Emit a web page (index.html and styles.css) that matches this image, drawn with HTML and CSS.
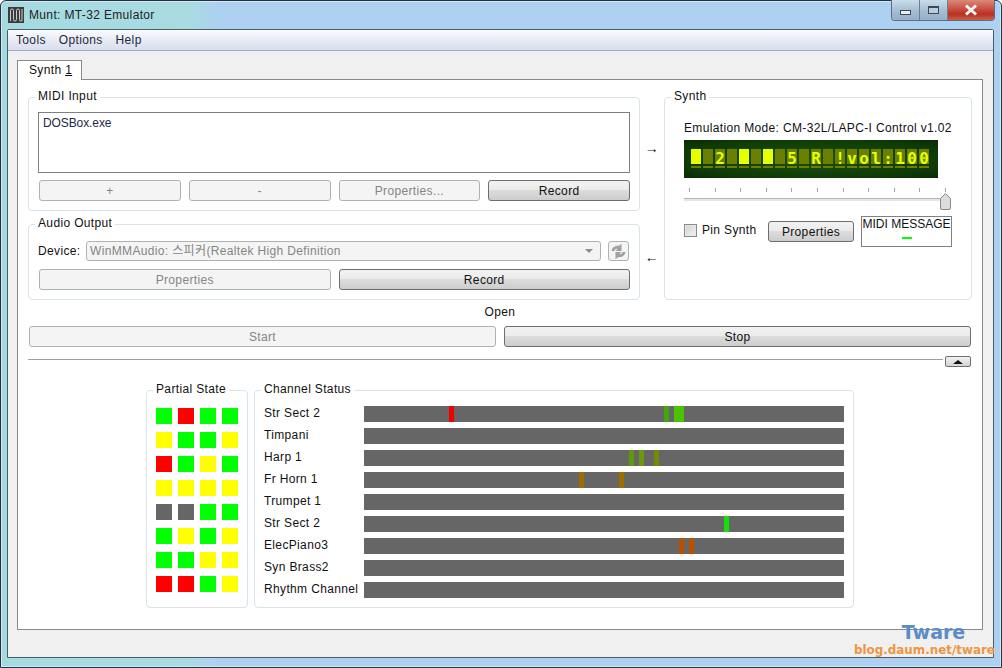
FILE: index.html
```html
<!DOCTYPE html>
<html lang="en">
<head>
<meta charset="utf-8">
<title>Munt: MT-32 Emulator</title>
<link rel="stylesheet" href="styles.css">
</head>
<body>
<div class="window">
  <header class="titlebar">
    <svg class="app-icon" width="16" height="16" viewBox="0 0 16 16">
      <rect width="16" height="16" fill="#3c3c3c"/>
      <path d="M2.5 14V3.5Q2.5 2 4 2T5.500 3.500V12.500Q5.500 14 7 14T8.500 12.500V3.500Q8.500 2 10 2T11.500 3.500V12.500Q11.500 14 13 14T14 12.500V2" fill="none" stroke="#cfcfcf" stroke-width="1"/>
    </svg>
    <span class="title-text">Munt: MT-32 Emulator</span>
    <div class="controls">
      <div class="ctl ctl-min"><i class="glyph-min"></i></div>
      <div class="ctl ctl-max"><i class="glyph-max"></i></div>
      <div class="ctl ctl-close"><svg width="16" height="12" viewBox="0 0 16 12"><path d="M3 1.500L13 10.500M13 1.500L3 10.500" stroke="#f4f4f4" stroke-width="3"/></svg></div>
    </div>
  </header>
  <div class="client">
    <nav class="menubar"><span>Tools</span><span>Options</span><span>Help</span></nav>
    <div class="tabbar"><div class="tab">Synth <u>1</u></div></div>
    <main class="pane">
      <section class="top">
        <div class="left-col">
          <div class="group midi">
            <span class="legend">MIDI Input</span>
            <div class="listbox">DOSBox.exe</div>
            <div class="btn-row four">
              <button class="btn" disabled>+</button>
              <button class="btn" disabled>-</button>
              <button class="btn" disabled>Properties...</button>
              <button class="btn on">Record</button>
            </div>
          </div>
          <div class="group audio">
            <span class="legend">Audio Output</span>
            <div class="device-row">
              <span class="device-label">Device:</span>
              <div class="combo"><span class="combo-text">WinMMAudio: 스피커(Realtek High Definition</span><i class="combo-arrow"></i></div>
              <div class="refresh">
                <svg width="17" height="17" viewBox="0 0 17 17">
                  <path d="M1.500 8C2 4.500 5.500 2 9 2.800L11.500 .8V8H5.500L7.500 6C6 5.500 4.800 6.500 4.500 8Z" fill="#a0a0a0"/>
                  <path d="M15.500 9C15 12.500 11.500 15 8 14.200L5.500 16.200V9H11.500L9.500 11C11 11.500 12.200 10.500 12.500 9Z" fill="#a0a0a0"/>
                </svg>
              </div>
            </div>
            <div class="btn-row two">
              <button class="btn" disabled>Properties</button>
              <button class="btn on">Record</button>
            </div>
          </div>
        </div>
        <div class="arrows"><span>→</span><span>←</span></div>
        <div class="group synth">
          <span class="legend">Synth</span>
          <div class="emu">Emulation Mode: CM-32L/LAPC-I Control v1.02</div>
          <div class="lcd">
            <div class="cell lit"></div><div class="cell"></div><div class="cell">2</div><div class="cell"></div>
            <div class="cell lit"></div><div class="cell"></div><div class="cell lit"></div><div class="cell"></div>
            <div class="cell">5</div><div class="cell"></div><div class="cell">R</div><div class="cell"></div>
            <div class="cell">!</div><div class="cell">v</div><div class="cell">o</div><div class="cell">l</div>
            <div class="cell">:</div><div class="cell">1</div><div class="cell">0</div><div class="cell">0</div>
          </div>
          <div class="slider">
            <div class="ticks"><i></i><i></i><i></i><i></i><i></i><i></i><i></i><i></i><i></i><i></i><i></i></div>
            <div class="groove"><svg class="handle" width="11" height="17" viewBox="0 0 11 17"><path d="M.5 5.500L5.500 .5L10.500 5.500V15Q10.500 16.500 9 16.500H2Q.5 16.500 .5 15Z" fill="#dcdcdc" stroke="#8a8a8a"/></svg></div>
          </div>
          <div class="synth-bottom">
            <label class="pin"><i class="check"></i>Pin Synth</label>
            <button class="btn on props">Properties</button>
            <div class="midi-msg">MIDI MESSAGE<i class="led"></i></div>
          </div>
        </div>
      </section>
      <div class="open">Open</div>
      <div class="btn-row transport">
        <button class="btn" disabled>Start</button>
        <button class="btn on">Stop</button>
      </div>
      <div class="sep-row">
        <div class="sep"></div>
        <button class="collapse"><i></i></button>
      </div>
      <section class="bottom">
        <div class="group partial">
          <span class="legend">Partial State</span>
          <div class="partial-grid">
            <i class="g"></i><i class="r"></i><i class="g"></i><i class="g"></i>
            <i class="y"></i><i class="g"></i><i class="g"></i><i class="y"></i>
            <i class="r"></i><i class="g"></i><i class="y"></i><i class="g"></i>
            <i class="y"></i><i class="y"></i><i class="y"></i><i class="y"></i>
            <i class="o"></i><i class="o"></i><i class="g"></i><i class="g"></i>
            <i class="g"></i><i class="y"></i><i class="g"></i><i class="y"></i>
            <i class="g"></i><i class="g"></i><i class="y"></i><i class="y"></i>
            <i class="r"></i><i class="r"></i><i class="g"></i><i class="y"></i>
          </div>
        </div>
        <div class="group channels">
          <span class="legend">Channel Status</span>
          <div class="channel"><span class="ch-name">Str Sect 2</span><div class="bar">
            <b style="left:85px;width:5px;background:#f00000"></b>
            <b style="left:300px;width:5px;background:#3fa80a"></b>
            <b style="left:310px;width:10px;background:#4bc400"></b>
          </div></div>
          <div class="channel"><span class="ch-name">Timpani</span><div class="bar"></div></div>
          <div class="channel"><span class="ch-name">Harp 1</span><div class="bar">
            <b style="left:265px;width:5px;background:#5c9a08"></b>
            <b style="left:275px;width:5px;background:#6a9a04"></b>
            <b style="left:290px;width:5px;background:#738a02"></b>
          </div></div>
          <div class="channel"><span class="ch-name">Fr Horn 1</span><div class="bar">
            <b style="left:215px;width:5px;background:#a06c00"></b>
            <b style="left:255px;width:5px;background:#a06c00"></b>
          </div></div>
          <div class="channel"><span class="ch-name">Trumpet 1</span><div class="bar"></div></div>
          <div class="channel"><span class="ch-name">Str Sect 2</span><div class="bar">
            <b style="left:360px;width:5px;background:#17e005"></b>
          </div></div>
          <div class="channel"><span class="ch-name">ElecPiano3</span><div class="bar">
            <b style="left:315px;width:5px;background:#b85000"></b>
            <b style="left:325px;width:5px;background:#b85000"></b>
          </div></div>
          <div class="channel"><span class="ch-name">Syn Brass2</span><div class="bar"></div></div>
          <div class="channel"><span class="ch-name">Rhythm Channel</span><div class="bar"></div></div>
        </div>
      </section>
    </main>
    <div class="watermark"><div class="wm-big">Tware</div><div class="wm-small">blog.daum.net/tware</div></div>
  </div>
</div>
</body>
</html>
```
FILE: styles.css
```css
* { box-sizing: border-box; }
html, body { margin: 0; padding: 0; }
body {
  width: 1002px;
  height: 668px;
  overflow: hidden;
  font-family: "Liberation Sans", "Noto Sans CJK KR", sans-serif;
  font-size: 12px;
  letter-spacing: 0.35px;
  color: #111;
}
i, b { display: block; }

.window {
  width: 1002px;
  height: 668px;
  display: flex;
  flex-direction: column;
  padding: 0 7px 9px 6px;
  border: 1px solid #24343f;
  border-radius: 6px 6px 0 0;
  background:
    linear-gradient(90deg, #a5dbe0 0, #a8dbe2 190px, #aed1f2 215px, #aed1f2 100%);
  box-shadow: inset 0 0 0 1px #d5e6f5;
}
.titlebar {
  height: 28px;
  display: flex;
  align-items: flex-start;
  flex: none;
}
.app-icon { margin: 6px 0 0 1px; flex: none; }
.title-text { margin: 6px 0 0 5px; font-size: 12px; line-height: 16px; color: #222; }
.controls { margin: -1px -1px 0 auto; display: flex; height: 21px; border: 1px solid #5c6f80; border-top: 0; border-radius: 0 0 4px 4px; overflow: hidden; }
.ctl { display: flex; align-items: center; justify-content: center; }
.ctl-min, .ctl-max { width: 28px; background: linear-gradient(#c9dcec, #a5bdd2 55%, #96b0c8); border-right: 1px solid #6c8094; }
.ctl-close { width: 46px; background: linear-gradient(#d98a7c, #c9483a 50%, #b92f22 70%, #c8604e); }
.glyph-min { width: 11px; height: 5px; margin-top: 5px; background: #e8eef4; border: 1px solid #3d4a56; }
.glyph-max { width: 11px; height: 8px; border: 1px solid #3d4a56; border-top-width: 2px; background: #b9cde0; }

.client {
  flex: 1;
  position: relative;
  display: flex;
  flex-direction: column;
  padding-bottom: 27px;
  border: 1px solid #4c5c6a;
  border-radius: 2px 2px 0 0;
  background: #f0f0f0;
}
.menubar {
  height: 21px;
  flex: none;
  display: flex;
  gap: 13px;
  padding: 3px 0 0 8px;
  line-height: 15px;
  background: linear-gradient(#fbfcfe, #e6e9f5 55%, #d9deee);
  border-bottom: 1px solid #a5adc4;
  color: #1c2a3c;
}
.tabbar { padding: 9px 0 0 9px; flex: none; }
.tab {
  position: relative;
  z-index: 1;
  width: 65px;
  height: 20px;
  margin-bottom: -1px;
  padding: 2px 0 0 11px;
  line-height: 15px;
  background: #fff;
  border: 1px solid #8a8a8a;
  border-bottom: 0;
}
.pane {
  flex: 1;
  margin: 0 10px 0 9px;
  padding: 17px 10px 0;
  background: #fff;
  border: 1px solid #8a8a8a;
  display: flex;
  flex-direction: column;
}

.top { display: flex; height: 203px; flex: none; }
.left-col { width: 612px; flex: none; display: flex; flex-direction: column; gap: 13px; }
.group {
  position: relative;
  border: 1px solid #d9e3ec;
  border-radius: 4px;
  background: #fff;
}
.legend {
  position: absolute;
  top: -9px;
  left: 6px;
  padding: 0 3px;
  line-height: 15px;
  background: #fff;
  white-space: nowrap;
}
.midi { height: 114px; padding: 14px 9px 0; }
.listbox {
  height: 61px;
  padding: 2px 4px;
  line-height: 16px;
  letter-spacing: -0.1px;
  border: 1px solid #7f7f8a;
  color: #1d2a4a;
}
.btn-row { display: grid; gap: 8px; }
.four { grid-template-columns: repeat(4, 1fr); margin: 7px 0 0 1px; }
.two { grid-template-columns: repeat(2, 1fr); margin: 8px 0 0 1px; }
.btn {
  height: 21px;
  padding: 0;
  font: inherit;
  letter-spacing: inherit;
  color: #111;
  border: 1px solid #6e6e6e;
  border-radius: 3px;
  background: linear-gradient(#f2f2f2, #ebebeb 45%, #dcdcdc 50%, #cdcdcd);
}
.btn:disabled {
  color: #858585;
  border-color: #adb2b5;
  background: #f4f4f4;
}
.audio { flex: 1; padding: 16px 9px 0; }
.device-row { display: flex; align-items: center; height: 20px; }
.device-label { width: 48px; flex: none; margin-bottom: 1px; }
.combo {
  width: 515px;
  height: 20px;
  flex: none;
  display: flex;
  align-items: center;
  justify-content: space-between;
  padding: 0 7px 0 3px;
  color: #858585;
  background: #f4f4f4;
  border: 1px solid #adb2b5;
  border-radius: 3px;
}
.combo-text { margin-bottom: 3px; }
.combo-arrow { width: 0; height: 0; border: 4px solid transparent; border-top: 4px solid #8c8c8c; border-bottom: 0; }
.refresh {
  width: 21px;
  height: 20px;
  flex: none;
  margin-left: 7px;
  display: flex;
  align-items: center;
  justify-content: center;
  background: #f4f4f4;
  border: 1px solid #adb2b5;
  border-radius: 3px;
}

.arrows {
  width: 24px;
  flex: none;
  display: flex;
  flex-direction: column;
  align-items: center;
  gap: 93px;
  padding-top: 43px;
  font-size: 14px;
  line-height: 16px;
  color: #111;
}
.synth { width: 308px; flex: none; padding: 23px 19px 0; }
.emu { line-height: 15px; white-space: nowrap; }
.lcd {
  margin-top: 4px;
  width: 254px;
  height: 38px;
  padding: 9px 0 0 7px;
  display: flex;
  gap: 2px;
  background: radial-gradient(ellipse at center, #1b5209, #0f3a05 75%, #0a2b03);
}
.cell {
  width: 10px;
  height: 19px;
  flex: none;
  font-family: "DejaVu Sans Mono", monospace;
  font-weight: bold;
  font-size: 16px;
  line-height: 19px;
  letter-spacing: 0;
  padding-bottom: 4px;
  text-align: center;
  color: #e4ff00;
  background:
    linear-gradient(#6b7f00, #6b7f00) 0 0 / 10px 15px no-repeat,
    linear-gradient(#6b7f00, #6b7f00) 0 17px / 10px 2px no-repeat;
}
.cell.lit {
  background:
    linear-gradient(#e8ff00, #e8ff00) 0 0 / 10px 15px no-repeat,
    linear-gradient(#6b7f00, #6b7f00) 0 17px / 10px 2px no-repeat;
}
.slider { margin-top: 10px; height: 21px; position: relative; }
.ticks { display: flex; justify-content: space-between; padding: 0 6px 0 5px; width: 268px; }
.ticks i { width: 1px; height: 4px; background: #a8a8a8; }
.groove {
  position: relative;
  margin-top: 6px;
  width: 264px;
  height: 3px;
  background: #e6e6e6;
  border-top: 1px solid #b4b4b4;
}
.handle { position: absolute; right: -3px; top: -6px; }
.synth-bottom { display: flex; align-items: flex-start; margin-top: 7px; height: 31px; }
.pin { display: flex; align-items: center; gap: 5px; width: 84px; flex: none; line-height: 15px; margin-top: 7px; }
.check { width: 13px; height: 13px; border: 1px solid #8a8a8a; background: linear-gradient(135deg, #d0d0d0, #f4f4f4); box-shadow: inset 0 0 0 1px #e8e8e8; }
.props { width: 86px; height: 21px; margin-top: 5px; flex: none; }
.midi-msg {
  width: 91px;
  height: 31px;
  flex: none;
  margin-left: 7px;
  border: 1px solid #7f7f8a;
  line-height: 15px;
  letter-spacing: 0;
  text-align: center;
  white-space: nowrap;
  color: #111;
}
.led { width: 10px; height: 2px; margin: 5px auto 0; background: #00ff00; }

.open { height: 26px; padding-top: 5px; line-height: 15px; text-align: center; flex: none; }
.transport { grid-template-columns: 1fr 1fr; margin: 0 1px; flex: none; }
.sep-row { display: flex; align-items: flex-start; margin-top: 9px; height: 11px; flex: none; gap: 2px; }
.sep { flex: 1; height: 1px; background: #9f9f9f; margin-top: 3px; }
.collapse {
  width: 26px;
  height: 11px;
  margin-right: 1px;
  padding: 0;
  display: flex;
  align-items: center;
  justify-content: center;
  border: 1px solid #6e6e6e;
  border-radius: 2px;
  background: linear-gradient(#f2f2f2, #d4d4d4);
}
.collapse i { width: 0; height: 0; border: 5px solid transparent; border-bottom: 4px solid #111; border-top: 0; }

.bottom { display: flex; justify-content: center; gap: 6px; margin-top: 23px; height: 218px; flex: none; }
.partial { width: 102px; flex: none; padding: 17px 9px 0; }
.partial-grid { display: grid; grid-template-columns: repeat(4, 16px); column-gap: 6px; row-gap: 8px; }
.partial-grid i { height: 16px; }
.g { background: #00ff00; }
.r { background: #ff0000; }
.y { background: #ffff00; }
.o { background: #666666; }
.channels { width: 600px; flex: none; padding: 15px 9px 0; display: flex; flex-direction: column; gap: 6px; }
.channel { display: flex; height: 16px; align-items: center; }
.ch-name { width: 100px; flex: none; line-height: 15px; margin-bottom: 2px; white-space: nowrap; }
.bar { position: relative; width: 480px; height: 16px; background: #666666; }
.bar b { position: absolute; top: 0; height: 16px; }

.watermark {
  position: absolute;
  right: -1px;
  bottom: 0;
  width: 140px;
  font-family: "DejaVu Sans", sans-serif;
  font-weight: bold;
  letter-spacing: 0;
  text-align: center;
}
.wm-big { font-size: 19px; line-height: 22px; color: #5c8cc8; padding-left: 19px; }
.wm-small { font-size: 11.9px; line-height: 14px; color: #f0953f; white-space: nowrap; }
```
